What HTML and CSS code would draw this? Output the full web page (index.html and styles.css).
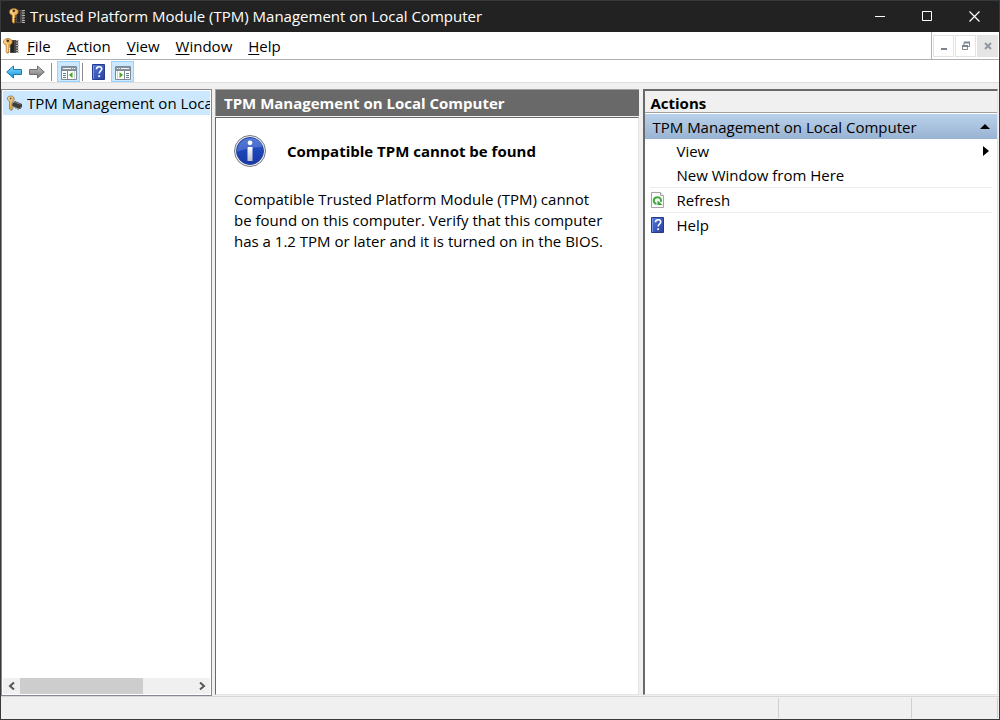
FILE: index.html
```html
<!DOCTYPE html>
<html lang="en">
<head>
<meta charset="utf-8">
<title>Trusted Platform Module (TPM) Management on Local Computer</title>
<link rel="stylesheet" href="styles.css">
</head>
<body>
<svg class="defs" aria-hidden="true">
  <defs>
    <linearGradient id="gold" x1="0" y1="0" x2="1" y2="1"><stop offset="0" stop-color="#ffe3a0"/><stop offset="1" stop-color="#d98a1c"/></linearGradient>
    <linearGradient id="blueArrow" x1="0" y1="0" x2="0" y2="1"><stop offset="0" stop-color="#8fe0fb"/><stop offset="1" stop-color="#0d8fd6"/></linearGradient>
    <linearGradient id="grayArrow" x1="0" y1="0" x2="0" y2="1"><stop offset="0" stop-color="#c2c2c2"/><stop offset="1" stop-color="#777"/></linearGradient>
    <linearGradient id="book" x1="0" y1="0" x2="1" y2="1"><stop offset="0" stop-color="#4f7bdc"/><stop offset="1" stop-color="#2a3f9d"/></linearGradient>
    <linearGradient id="ball" x1="0" y1="0" x2="0" y2="1"><stop offset="0" stop-color="#3f68cf"/><stop offset="0.5" stop-color="#1c45b8"/><stop offset="1" stop-color="#1838a4"/></linearGradient>
    <linearGradient id="silver" x1="0" y1="0" x2="0" y2="1"><stop offset="0" stop-color="#fff"/><stop offset="1" stop-color="#b9bfcc"/></linearGradient>
    <symbol id="key-chip" viewBox="0 0 16 16">
      <path d="M7 2h8v13H7z" fill="#4d4a4a"/>
      <path d="M8 3h3v11H8z" fill="#262525"/>
      <path d="M13 2.500h3M13 5h3M13 7.500h3M13 10h3M13 12.500h3M13 14.500h3" stroke="#b5b2af"/>
      <path d="M5 .5C2.300.500.500 2 .500 4c0 1.500 1 2.700 2.700 3.200V14l1.500 1.500L6.300 14l-1-1.200 1-1-1-1.300 1-1V7.200C8 6.700 9.300 5.500 9.300 4 9.300 2 7.500.5 5 .5z" fill="url(#gold)" stroke="#a66a17" stroke-width=".7"/>
      <circle cx="4.800" cy="2.800" r="1.400" fill="#553714"/>
      <path d="M4.300 6.500V14" stroke="#ffe9ad" stroke-width=".9"/>
    </symbol>
    <symbol id="help-book" viewBox="0 0 14 16">
      <path d="M.5.500h12v15H.5z" fill="url(#book)" stroke="#273b8d"/>
      <path d="M1.500 1v14" stroke="#7795e8"/>
      <path d="M4.500 5.300C4.500 3.500 5.500 2.700 7.100 2.700c1.700 0 2.600.9 2.600 2.200C9.700 7 7.200 7 7.200 9.600" fill="none" stroke="#fff" stroke-width="1.600"/>
      <path d="M6.300 11.300h1.800v1.800H6.300z" fill="#fff"/>
    </symbol>
    <symbol id="console" viewBox="0 0 16 14">
      <path d="M.5.500h15v13H.5z" fill="#fff" stroke="#7f8994"/>
      <path d="M1 1h14v3H1z" fill="#8b949e"/>
      <path d="M2 2.500h8M11 2.500h1M13 2.500h1" stroke="#edf2f6"/>
      <path d="M.5 4.500h15M6.500 5v8" stroke="#7f8994"/>
      <path d="M2 7.500h3M2 9.500h3M2 11.500h3" stroke="#5e8093"/>
      <path d="M11.500 6v6L8 9z" fill="#45aa20"/>
      <path d="M13.500 5v8" stroke="#cbd2d9"/>
    </symbol>
  </defs>
</svg>
<div class="window">
  <header class="titlebar">
    <svg class="icon"><use href="#key-chip"/></svg>
    <h1 class="title">Trusted Platform Module (TPM) Management on Local Computer</h1>
    <div class="caption">
      <button aria-label="Minimize"><svg width="11" height="11"><path d="M0 5.500h10" stroke="#fff"/></svg></button>
      <button aria-label="Maximize"><svg width="11" height="11"><path d="M.5.500h9v9h-9z" fill="none" stroke="#fff"/></svg></button>
      <button aria-label="Close"><svg width="11" height="11"><path d="M.5.500l10 10M10.500.500l-10 10" stroke="#fff" stroke-width="1.200"/></svg></button>
    </div>
  </header>
  <nav class="menubar">
    <svg class="icon"><use href="#key-chip"/></svg>
    <div class="menus">
      <button><u>F</u>ile</button>
      <button><u>A</u>ction</button>
      <button><u>V</u>iew</button>
      <button><u>W</u>indow</button>
      <button><u>H</u>elp</button>
    </div>
    <div class="child-caption">
      <button aria-label="Minimize child window"><svg width="10" height="10"><path d="M2 8h6" stroke="#7b858f" stroke-width="2"/></svg></button>
      <button aria-label="Restore child window"><svg width="10" height="10"><path d="M3 4V1.500h5.500v4H7" fill="none" stroke="#7b858f"/><path d="M3 1.500h6" stroke="#7b858f" stroke-width="2"/><path d="M1.500 4.500h5v4h-5z" fill="#fff" stroke="#7b858f"/><path d="M1 5h6" stroke="#7b858f" stroke-width="2"/></svg></button>
      <button class="disabled" aria-label="Close child window" disabled><svg width="10" height="10"><path d="M2 2l6 6M8 2l-6 6" stroke="#9299a1" stroke-width="2"/></svg></button>
    </div>
  </nav>
  <div class="toolbar">
    <button aria-label="Back"><svg width="16" height="14"><path d="M.7 7L7.500 1v3.500h8v5h-8V13z" fill="url(#blueArrow)" stroke="#187ab2"/></svg></button>
    <button aria-label="Forward"><svg width="16" height="14"><path d="M15.300 7L8.500 1v3.500h-8v5h8V13z" fill="url(#grayArrow)" stroke="#6d6d6d"/></svg></button>
    <span class="divider"></span>
    <button class="pressed" aria-label="Show or hide console tree"><svg width="16" height="14"><use href="#console"/></svg></button>
    <span class="divider"></span>
    <button class="help" aria-label="Help"><svg width="14" height="16"><use href="#help-book"/></svg></button>
    <button class="pressed" aria-label="Show or hide action pane"><svg width="16" height="14"><use href="#console" transform="matrix(-1 0 0 1 16 0)"/></svg></button>
  </div>
  <main class="panes">
    <aside class="tree">
      <button class="node">
        <svg class="icon" viewBox="0 0 16 16"><path d="M6 9l3-3 7 3v3l-2.500 2L6 11z" fill="#3e3c3a"/><path d="M8 11v2M10 12v2M12 13v2M14.500 12v2" stroke="#77736d"/><path d="M8.500 7l6 2.300" stroke="#888"/><path d="M4.500 1C2 1 1 2.500 1.500 4.300c.3 1 1 1.700 2 2.100L3.500 14 5 15.500l2-1.800-1-1 1-1.200-1-1 .5-3.800C8 6 8.500 4.500 8 3 7.500 1.500 6.500 1 4.500 1z" fill="url(#gold)" stroke="#80735b" stroke-width=".8"/><path d="M2 3l2-1 3 2-2 1.500z" fill="#ddd9cc"/><circle cx="4.600" cy="3.400" r="1" fill="#70542b"/></svg>
        <span class="node-label">TPM Management on Local Computer</span>
      </button>
      <div class="scroll">
        <button aria-label="Scroll left"><svg width="8" height="8"><path d="M6 .5L2 4l4 3.500" fill="none" stroke="#555" stroke-width="2"/></svg></button>
        <div class="track"><div class="thumb"></div></div>
        <button aria-label="Scroll right"><svg width="8" height="8"><path d="M2 .5L6 4 2 7.500" fill="none" stroke="#555" stroke-width="2"/></svg></button>
      </div>
    </aside>
    <section class="content">
      <h2 class="content-title">TPM Management on Local Computer</h2>
      <div class="content-body">
        <div class="notice">
          <svg width="32" height="32"><circle cx="16" cy="16" r="15.500" fill="#e9ebef" stroke="#777b83"/><circle cx="16" cy="16" r="13.500" fill="url(#ball)" stroke="#2947a0"/><path d="M3 17C3 0 28-1 28.500 12 20 12 10 14 3 17z" fill="#7392df" opacity=".45"/><circle cx="16" cy="7.800" r="2.400" fill="#fff"/><path d="M14 12h4.500v14h-5V13.500z" fill="url(#silver)"/></svg>
          <h3>Compatible TPM cannot be found</h3>
        </div>
        <p>Compatible Trusted Platform Module (TPM) cannot be found on this computer. Verify that this computer has a 1.2 TPM or later and it is turned on in the BIOS.</p>
      </div>
    </section>
    <aside class="actions">
      <h2 class="actions-title">Actions</h2>
      <button class="group"><span>TPM Management on Local Computer</span><svg width="10" height="6"><path d="M5 0l5 5H0z"/></svg></button>
      <div class="list">
        <button><span class="slot"></span><span class="label">View</span><svg class="submenu" width="6" height="10"><path d="M0 0l6 5-6 5z"/></svg></button>
        <button><span class="slot"></span><span class="label">New Window from Here</span></button>
        <button class="ruled"><span class="slot"><svg width="14" height="16"><path d="M.5.500h9l3 3v12H.5z" fill="#fcfcfc" stroke="#a5a5a5"/><path d="M9.500.500v3h3" fill="#eee" stroke="#a5a5a5"/><path d="M5.500 12C1.500 11 2 5.200 6.500 5.200c3 0 4.200 2.300 3.200 4.800" fill="none" stroke="#43ab43" stroke-width="2"/><path d="M6.500 8.500v4.500h5z" fill="#34a338"/></svg></span><span class="label">Refresh</span></button>
        <button class="ruled"><span class="slot"><svg width="14" height="16"><use href="#help-book"/></svg></span><span class="label">Help</span></button>
      </div>
    </aside>
  </main>
  <footer class="status"><span></span><span></span><span></span></footer>
</div>
</body>
</html>
```
FILE: styles.css
```css
* { box-sizing: border-box; }
body { margin: 0; font: 15px/24px "Open Sans", "Noto Sans", sans-serif; color: #000; }
h1, h2, h3, p { margin: 0; font-size: 15px; }
button { display: flex; align-items: center; padding: 0; border: 0; background: none; font: inherit; color: inherit; text-align: left; }
svg { display: block; flex: none; }
.defs { position: absolute; width: 0; height: 0; }
.icon { width: 16px; height: 16px; }
.window { display: flex; flex-direction: column; height: 100vh; min-height: 400px; border: 1px solid #38393a; background: #f0f0f0; }

.titlebar { display: flex; align-items: center; gap: 5px; height: 31px; padding: 0 1px 1px 8px; background: #222; color: #fff; }
.title { flex: 1; font-weight: 400; white-space: nowrap; }
.caption { display: flex; align-self: stretch; }
.caption button { width: 47px; justify-content: center; }

.menubar { display: flex; align-items: center; height: 28px; padding: 0 1px 0 2px; border-bottom: 1px solid #b0b0b0; background: #fff; }
.menus { display: flex; flex: 1; gap: 16px; padding-left: 8px; }
.menus u { text-underline-offset: 2px; }
.child-caption { display: flex; align-self: stretch; gap: 1px; padding: 3px 0 2px 1px; border-left: 1px solid #b0b0b0; }
.child-caption button { width: 21px; justify-content: center; border: 1px solid #e3e3e3; }
.child-caption .disabled { background: #e5e5e5; }

.toolbar { display: flex; align-items: center; height: 23px; padding: 1px 0 0 5px; border-bottom: 1px solid #dedede; background: #fff; }
.toolbar button { width: 23px; height: 21px; justify-content: center; }
.toolbar button:first-child { width: 16px; margin-right: 3px; }
.toolbar .pressed { padding: 2px 0 0 1px; border: 1px solid #99d1ff; background: #cce8ff; }
.toolbar .help { width: 28px; padding-left: 3px; }
.divider { width: 1px; height: 18px; margin: 0 5px 0 3px; background: #8c8c8c; }
.pressed + .divider { margin: 0 0 0 2px; }

.panes { display: grid; grid-template-columns: 211px minmax(0, 424fr) minmax(0, 355fr); column-gap: 4px; flex: 1; min-height: 0; padding: 6px 1px 0 0; }
.tree { display: flex; flex-direction: column; justify-content: space-between; min-width: 0; padding: 1px; border: 1px solid #828790; background: #fff; }
.node { gap: 5px; height: 24px; padding-left: 3px; overflow: hidden; background: #cce8ff; white-space: nowrap; }
.node-label { flex: 1; min-width: 0; overflow: hidden; }
.scroll { display: flex; height: 16px; background: #f0f0f0; }
.scroll button { width: 17px; justify-content: center; }
.track { flex: 1; }
.thumb { width: 71%; height: 100%; background: #cdcdcd; }

.content { display: flex; flex-direction: column; gap: 1px; margin-left: -1px; padding-bottom: 1px; }
.content-title { height: 27px; padding: 1px 8px 0; border-top: 1px solid #a0a0a0; border-left: 1px solid #a0a0a0; background: #696969; color: #fff; }
.content-body { flex: 1; padding: 17px 18px; border: 1px solid #e3e3e3; border-top-color: #696969; border-left-color: #696969; background: #fff; }
.notice { display: flex; align-items: center; gap: 21px; margin-bottom: 22px; }
.content-body p { max-width: 374px; line-height: 21px; }

.actions { display: flex; flex-direction: column; margin-bottom: 1px; border: 1px solid #e3e3e3; border-top: 2px solid #696969; border-left: 2px solid #696969; background: #fff; }
.actions-title { height: 22px; padding-left: 5px; border-bottom: 1px solid #a0a0a0; background: #f0f0f0; }
.group { justify-content: space-between; height: 25px; margin-top: 1px; padding: 0 7px; background: linear-gradient(#bad1ea, #98b3d2); }
.list { padding: 0 5px; }
.list button { width: 100%; height: 24px; }
.list .ruled { height: 25px; border-top: 1px solid #ededed; }
.slot { width: 26px; padding-left: 1px; }
.label { flex: 1; }
.submenu { margin-right: 3px; }

.status { display: grid; grid-template-columns: 1fr 133px 86px; height: 23px; padding: 1px 1px 1px 0; border-top: 1px solid #d7d7d7; }
.status span { border-right: 1px solid #d0d0d0; }
```
